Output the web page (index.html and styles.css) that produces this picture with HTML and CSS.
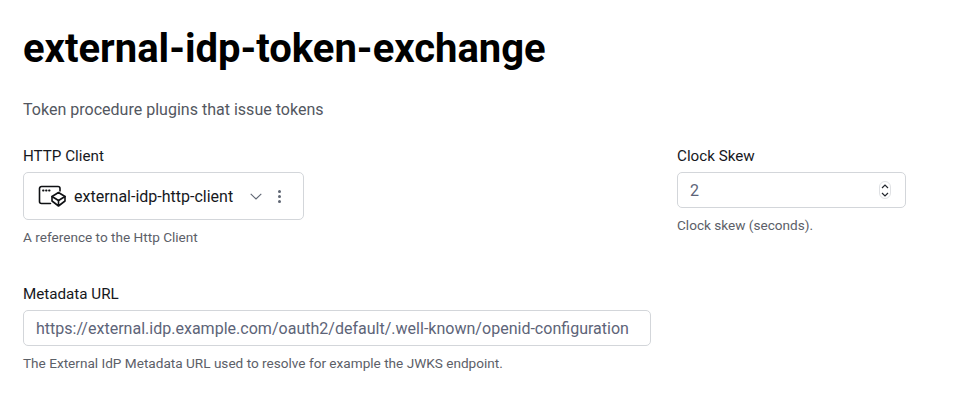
FILE: index.html
```html
<!DOCTYPE html>
<html lang="en">
<head>
    <meta charset="UTF-8">
    <title>external-idp-token-exchange</title>
    <link rel="stylesheet" href="styles.css">
</head>
<body>
    <div class="page">
        <h1>external-idp-token-exchange</h1>
        <p class="subtitle">Token procedure plugins that issue tokens</p>

        <div class="columns">
            <div class="main-column">
                <div class="field">
                    <label>HTTP Client</label>
                    <div class="ref-select">
                        <svg class="ref-icon" width="28" height="22" viewBox="0 0 28 22" fill="none" stroke="#0f1114" stroke-width="1.6" stroke-linejoin="round" stroke-linecap="round">
                            <path d="M12.5 18.5H3.5A2 2 0 0 1 1.5 16.5V3.5A2 2 0 0 1 3.5 1.5H20A2 2 0 0 1 22 3.5V6"/>
                            <path d="M5 5.5h.6M8 5.5h.6M11 5.5h.6" stroke-width="1.8"/>
                            <path d="M20.5 7.5L27 11.5L20.5 15.5L14 11.5Z"/>
                            <path d="M14 11.5V16L20.5 21L27 16V11.5M20.5 15.5V21"/>
                        </svg>
                        <span class="ref-name">external-idp-http-client</span>
                        <svg class="chevron" width="12" height="7" viewBox="0 0 12 7" fill="none" stroke="#5f6673" stroke-width="1.1">
                            <path d="M0.7 0.8L6 6L11.3 0.8"/>
                        </svg>
                        <span class="kebab"><i></i><i></i><i></i></span>
                    </div>
                    <p class="help">A reference to the Http Client</p>
                </div>
                <div class="field">
                    <label>Metadata URL</label>
                    <input class="text-input" type="text" value="https://external.idp.example.com/oauth2/default/.well-known/openid-configuration">
                    <p class="help">The External IdP Metadata URL used to resolve for example the JWKS endpoint.</p>
                </div>
            </div>
            <div class="side-column">
                <div class="field">
                    <label>Clock Skew</label>
                    <div class="number-input">
                        <span class="number-value">2</span>
                        <span class="stepper">
                            <svg width="8" height="5" viewBox="0 0 8 5" fill="none" stroke="#23262d" stroke-width="1.2"><path d="M1 4L4 1L7 4"/></svg>
                            <svg width="8" height="5" viewBox="0 0 8 5" fill="none" stroke="#23262d" stroke-width="1.2"><path d="M1 1L4 4L7 1"/></svg>
                        </span>
                    </div>
                    <p class="help">Clock skew (seconds).</p>
                </div>
            </div>
        </div>
    </div>
</body>
</html>
```

FILE: styles.css
```css
* {
    box-sizing: border-box;
}
body {
    margin: 0;
    background: #fff;
    font-family: Roboto, "Liberation Sans", sans-serif;
    color: #16181d;
}
.page {
    padding: 26px 0 0 23px;
}
h1 {
    margin: 0;
    font-size: 40px;
    line-height: 46px;
    font-weight: 700;
    color: #000;
}
.subtitle {
    margin: 28px 0 0;
    font-size: 16.05px;
    line-height: 20px;
    color: #53575f;
}
.columns {
    display: flex;
    margin-top: 26px;
}
.main-column {
    width: 628px;
}
.side-column {
    width: 229px;
    margin-left: 26px;
}
.field {
    margin-bottom: 39px;
}
label {
    display: block;
    font-size: 15.2px;
    line-height: 20px;
    margin-bottom: 6px;
    color: #16181d;
}
.ref-select {
    display: flex;
    align-items: center;
    width: 281px;
    height: 48px;
    padding: 0 22px 0 14px;
    border: 1px solid #d3d6da;
    border-radius: 5px;
}
.ref-icon {
    flex: none;
}
.ref-name {
    margin-left: 8px;
    font-size: 16px;
    color: #16181d;
}
.chevron {
    margin-left: auto;
}
.kebab {
    display: flex;
    flex-direction: column;
    gap: 2px;
    margin-left: 16px;
}
.kebab i {
    width: 3px;
    height: 3px;
    border-radius: 50%;
    background: #5f6673;
}
.help {
    margin: 9px 0 0;
    font-size: 13.6px;
    line-height: 16px;
    color: #5c6068;
}
.text-input {
    display: block;
    width: 100%;
    height: 36px;
    padding: 0 12px;
    border: 1px solid #d3d6da;
    border-radius: 5px;
    font-family: inherit;
    font-size: 16.05px;
    color: #5d6478;
    outline: none;
}
.number-input {
    display: flex;
    align-items: center;
    justify-content: space-between;
    height: 36px;
    padding: 0 14px 0 12px;
    border: 1px solid #d3d6da;
    border-radius: 5px;
}
.number-value {
    font-size: 16px;
    color: #5d6478;
}
.stepper {
    display: flex;
    flex-direction: column;
    align-items: center;
    justify-content: center;
    gap: 3px;
    width: 12px;
    height: 18px;
    border: 1px solid #dfe1e4;
    border-radius: 6px;
}
.stepper svg {
    display: block;
}
```
